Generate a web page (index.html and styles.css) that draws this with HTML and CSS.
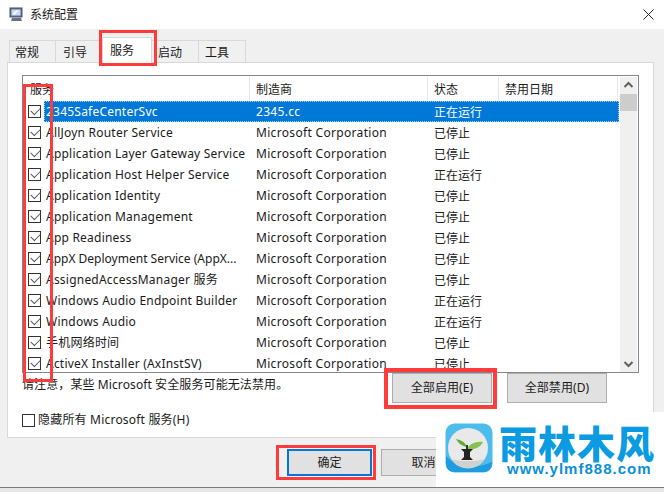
FILE: index.html
```html
<!DOCTYPE html>
<html lang="zh">
<head>
<meta charset="utf-8">
<title>系统配置</title>
<link rel="stylesheet" href="styles.css">
</head>
<body>
<div class="dialog">
  <header class="titlebar">
    <svg class="app-icon" width="14" height="15" viewBox="0 0 14 15">
      <rect x="1" y="1" width="12" height="9" fill="#5a6f9c" stroke="#4a4f68"/>
      <rect x="2.5" y="2.5" width="9" height="6" fill="#c9dcf2"/>
      <path d="M4 7l4-4 1 1-4 4z" fill="#fff"/>
      <path d="M3 11h9l1 3H2z" fill="#6c6f80"/>
    </svg>
    <span class="title">系统配置</span>
    <svg class="close" width="11" height="11" viewBox="0 0 11 11"><path d="M.5.5l10 10M10.5.5l-10 10" stroke="#222" fill="none"/></svg>
  </header>
  <main class="body">
    <nav class="tabs">
      <span class="tab">常规</span>
      <span class="tab">引导</span>
      <span class="tab active">服务</span>
      <span class="tab">启动</span>
      <span class="tab">工具</span>
    </nav>
    <section class="panel">
      <div class="list">
        <div class="rows">
          <div class="row head"><span class="c1">服务</span><span class="c2">制造商</span><span class="c3">状态</span><span class="c4">禁用日期</span></div>
          <div class="row sel"><i class="cb"></i><span class="n">2345SafeCenterSvc</span><span class="m">2345.cc</span><span class="s">正在运行</span></div>
          <div class="row"><i class="cb"></i><span class="n">AllJoyn Router Service</span><span class="m">Microsoft Corporation</span><span class="s">已停止</span></div>
          <div class="row"><i class="cb"></i><span class="n">Application Layer Gateway Service</span><span class="m">Microsoft Corporation</span><span class="s">已停止</span></div>
          <div class="row"><i class="cb"></i><span class="n">Application Host Helper Service</span><span class="m">Microsoft Corporation</span><span class="s">正在运行</span></div>
          <div class="row"><i class="cb"></i><span class="n">Application Identity</span><span class="m">Microsoft Corporation</span><span class="s">已停止</span></div>
          <div class="row"><i class="cb"></i><span class="n">Application Management</span><span class="m">Microsoft Corporation</span><span class="s">已停止</span></div>
          <div class="row"><i class="cb"></i><span class="n">App Readiness</span><span class="m">Microsoft Corporation</span><span class="s">已停止</span></div>
          <div class="row"><i class="cb"></i><span class="n tight">AppX Deployment Service (AppX...</span><span class="m">Microsoft Corporation</span><span class="s">已停止</span></div>
          <div class="row"><i class="cb"></i><span class="n">AssignedAccessManager 服务</span><span class="m">Microsoft Corporation</span><span class="s">已停止</span></div>
          <div class="row"><i class="cb"></i><span class="n">Windows Audio Endpoint Builder</span><span class="m">Microsoft Corporation</span><span class="s">正在运行</span></div>
          <div class="row"><i class="cb"></i><span class="n">Windows Audio</span><span class="m">Microsoft Corporation</span><span class="s">正在运行</span></div>
          <div class="row"><i class="cb"></i><span class="n">手机网络时间</span><span class="m">Microsoft Corporation</span><span class="s">已停止</span></div>
          <div class="row"><i class="cb"></i><span class="n">ActiveX Installer (AxInstSV)</span><span class="m">Microsoft Corporation</span><span class="s">已停止</span></div>
        </div>
        <div class="scrollbar">
          <svg class="arrow" width="17" height="17" viewBox="0 0 17 17"><path d="M4.5 10l4-4 4 4" stroke="#606060" stroke-width="2" fill="none"/></svg>
          <div class="thumb"></div>
          <svg class="arrow bottom" width="17" height="17" viewBox="0 0 17 17"><path d="M4.5 7l4 4 4-4" stroke="#606060" stroke-width="2" fill="none"/></svg>
        </div>
      </div>
      <div class="note-row">
        <p class="note">请注意，某些 Microsoft 安全服务可能无法禁用。</p>
        <button class="btn wide">全部启用(E)</button>
        <button class="btn wide">全部禁用(D)</button>
      </div>
      <label class="hide"><i class="cb empty"></i><span>隐藏所有 Microsoft 服务(H)</span></label>
    </section>
    <footer class="actions">
      <button class="btn act primary">确定</button>
      <button class="btn act">取消</button>
    </footer>
  </main>
</div>

<div class="mark mark-tab"></div>
<div class="mark mark-col"></div>
<div class="mark mark-enable"></div>
<div class="mark mark-ok"></div>

<aside class="logo">
  <svg class="logo-icon" width="48" height="50" viewBox="0 0 48 50">
    <rect x="0.5" y="0.5" width="47" height="49" rx="9" fill="#4cbcec"/>
    <path d="M1 33c10 11 28 14 46 6v2a8 8 0 0 1-8 8H9a8 8 0 0 1-8-8z" fill="#1f9be0"/>
    <circle cx="23" cy="25" r="20" fill="#e8e9e8"/>
    <path d="M6 36a20 20 0 0 0 34 0c-10 3-24 3-34 0z" fill="#cfd1cf"/>
    <path d="M22 24C20 19 16 17 11 16c3 5 6 7 11 8z" fill="#62a83a"/>
    <path d="M22 26c2-5 9-8 16-7-3 6-9 8-16 7z" fill="#86c250"/>
    <path d="M21 22h2v5h-2z" fill="#333"/>
    <path d="M16 26h12l-3 3v5l3 3H16l3-3v-5z" fill="#222"/>
  </svg>
  <div class="logo-text">
    <strong class="logo-name">雨林木风</strong>
    <span class="logo-url">www.ylmf888.com</span>
  </div>
</aside>
</body>
</html>
```
FILE: styles.css
```css
* { box-sizing: border-box; }
html, body { margin: 0; padding: 0; }
body {
  position: relative;
  width: 664px;
  height: 492px;
  overflow: hidden;
  background: #e6e6e6;
  font: 12px/16px "Noto Sans", "Noto Sans CJK SC", sans-serif;
  color: #1a1a1a;
}
.dialog {
  height: 488px;
  border-bottom: 1px solid #7a7a7a;
  display: flex;
  flex-direction: column;
  background: #f0f0f0;
}
.titlebar {
  height: 29px;
  flex: none;
  background: #fff;
  display: flex;
  align-items: center;
  padding: 0 10px 1px 9px;
}
.app-icon { margin-right: 7px; }
.title { flex: 1; font-family: "Noto Sans CJK SC", sans-serif; }
.body { flex: 1; padding: 11px 10px 0 7px; display: flex; flex-direction: column; }

.tabs { display: flex; height: 22px; padding-left: 2px; }
.tab {
  width: 47px;
  height: 22px;
  border: 1px solid #d9d9d9;
  border-bottom: 0;
  border-left-width: 0;
  padding: 3px 0 0 6px;
  font-family: "Noto Sans CJK SC", sans-serif;
}
.tab:first-child { width: 47px; padding-left: 5px; border-left-width: 1px; }
.tab:nth-child(2) { width: 46px; padding-left: 7px; }
.tab.active {
  width: 50px;
  height: 26px;
  margin-top: -3px;
  padding: 4px 0 0 7px;
  background: #fff;
  position: relative;
  z-index: 1;
  border-left-width: 1px;
}
.panel {
  height: 376px;
  background: #fff;
  border: 1px solid #d9d9d9;
  padding: 12px 14px 0;
}
.list {
  height: 298px;
  border: 1px solid #828790;
  display: flex;
  overflow: hidden;
}
.rows { width: 596px; flex: none; padding-top: 1px; }
.row {
  display: flex;
  align-items: center;
  height: 21px;
  position: relative;
  padding-left: 5px;
  white-space: nowrap;
}
.head { height: 23px; margin-bottom: 1px; padding-left: 0; }
.head span {
  height: 23px;
  line-height: 23px;
  padding-left: 6px;
  border-right: 1px solid #e5e5e5;
  font-family: "Noto Sans CJK SC", sans-serif;
}
.head .c1 { width: 227px; padding-left: 7px; }
.c2 { width: 178px; }
.c3 { width: 71px; }
.c4 { width: 119px; }
.cb {
  width: 13px;
  height: 13px;
  flex: none;
  border: 1px solid #333;
  background: #fff;
  position: relative;
}
.cb::after {
  content: "";
  position: absolute;
  left: 2px;
  top: 1px;
  width: 8px;
  height: 5px;
  border-left: 1.5px solid #555;
  border-bottom: 1.5px solid #555;
  transform: rotate(-45deg) scale(1, .95);
}
.cb.empty::after { display: none; }
.n { width: 210px; flex: none; margin-left: 5px; letter-spacing: .22px; }
.n.tight { letter-spacing: 0; }
.m { width: 178px; flex: none; letter-spacing: .32px; }
.s { font-family: "Noto Sans CJK SC", sans-serif; }
.sel .n, .sel .m, .sel .s { color: #fff; }
.sel::before {
  content: "";
  position: absolute;
  left: 21px;
  right: 0;
  top: 0;
  bottom: 0;
  background: #0078d7;
  border: 1px dotted #9fd0f5;
}
.sel span { position: relative; }
.scrollbar {
  width: 17px;
  margin: 1px 0 0 1px;
  background: #f0f0f0;
  display: flex;
  flex-direction: column;
}
.arrow { flex: none; }
.arrow.bottom { margin-top: auto; }
.thumb { height: 17px; background: #cdcdcd; }

.note-row { display: flex; align-items: flex-start; height: 31px; }
.note { margin: 4px 0 0; width: 370px; letter-spacing: .1px; }
.btn {
  font: 12px/16px "Noto Sans", "Noto Sans CJK SC", sans-serif;
  color: #1a1a1a;
  background: #e1e1e1;
  border: 1px solid #adadad;
  padding: 0;
}
.wide { width: 100px; height: 30px; margin-right: 15px; letter-spacing: .1px; }
.hide { display: flex; align-items: center; margin-top: 8px; }
.hide span { margin-left: 3px; letter-spacing: .2px; }
.actions { display: flex; gap: 9px; padding: 11px 0 0 280px; }
.act { width: 85px; height: 27px; }
.primary { border: 2px solid #0078d7; }

.mark { position: absolute; border: 3px solid #ff3b3b; pointer-events: none; z-index: 5; }
.mark-tab { left: 99px; top: 30px; width: 58px; height: 36px; }
.mark-col { left: 23px; top: 84px; width: 30px; height: 298px; }
.mark-enable { left: 384px; top: 368px; width: 113px; height: 41px; border-width: 4px; }
.mark-ok { left: 276px; top: 445px; width: 100px; height: 35px; }

.logo {
  position: absolute;
  left: 436px;
  top: 412px;
  width: 228px;
  height: 75px;
  background: #fff;
  display: flex;
  padding: 11px 0 0 9px;
  z-index: 6;
}
.logo-text { display: flex; flex-direction: column; margin-left: 6px; }
.logo-name {
  font: 900 38px/38px "Noto Sans CJK SC", sans-serif;
  color: #0a9be3;
  letter-spacing: 1px;
  white-space: nowrap;
}
.logo-url {
  font: bold 15px/14px "Liberation Sans", sans-serif;
  color: #0a8fd8;
  margin: 1px 0 0 8px;
  letter-spacing: 1px;
}
```
